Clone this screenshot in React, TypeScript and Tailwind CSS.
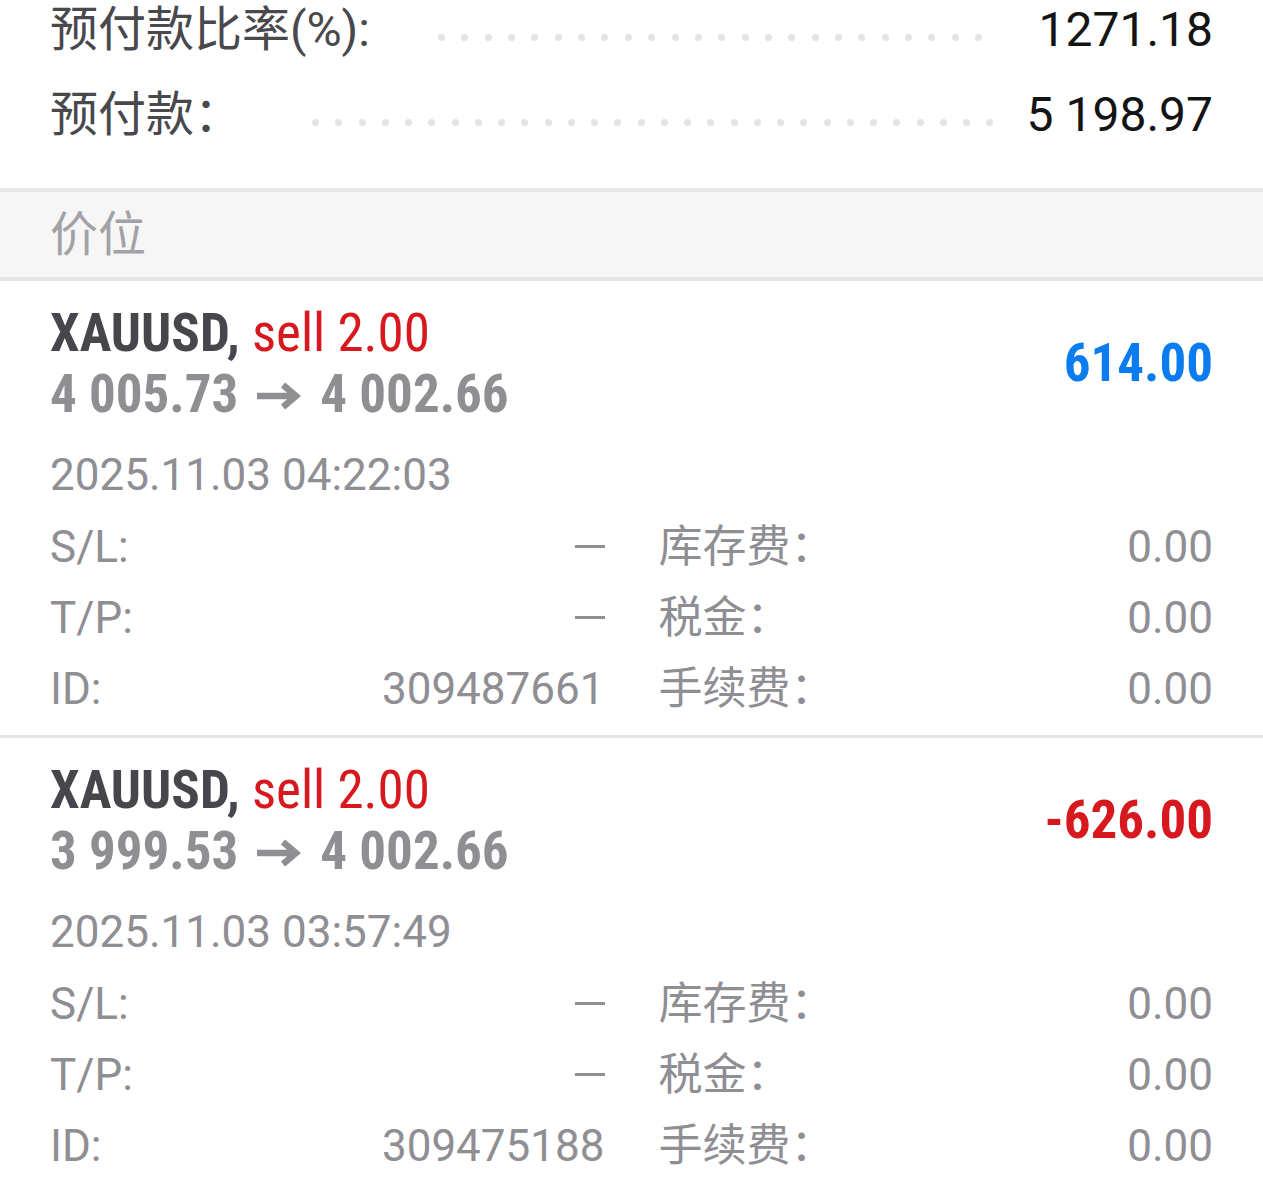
import React from 'react';

const latin = { fontFamily: '"Roboto", "Noto Sans CJK SC", sans-serif' };
const cond = { fontFamily: '"Roboto Condensed", "Roboto", "Noto Sans CJK SC", sans-serif' };

type Position = {
  symbol: string;
  side: string;
  open: string;
  current: string;
  profit: string;
  time: string;
  id: string;
};

const positions: Position[] = [
  {
    symbol: 'XAUUSD',
    side: 'sell 2.00',
    open: '4 005.73',
    current: '4 002.66',
    profit: '614.00',
    time: '2025.11.03 04:22:03',
    id: '309487661',
  },
  {
    symbol: 'XAUUSD',
    side: 'sell 2.00',
    open: '3 999.53',
    current: '4 002.66',
    profit: '-626.00',
    time: '2025.11.03 03:57:49',
    id: '309475188',
  },
];

function Dots({ count, className }: { count: number; className: string }) {
  return (
    <div className={`flex flex-1 justify-between mt-[14px] ${className}`}>
      {Array.from({ length: count }).map((_, i) => (
        <span key={i} className="w-[7px] h-[7px] rounded-full bg-[#e3e3e3]" />
      ))}
    </div>
  );
}

function Arrow() {
  return (
    <svg width="44" height="30" viewBox="0 0 44 30" className="mx-[19px] mt-[2px] shrink-0" aria-label="→">
      <path d="M0 15h38M26 4l13 11-13 11" fill="none" stroke="currentColor" strokeWidth="6.5" />
    </svg>
  );
}

function Cell({ label, value }: { label: string; value: string }) {
  return (
    <div className="flex items-center justify-between h-[71px]">
      <span>{label}</span>
      {value === '—' ? (
        <span className="block w-[30px] h-[3px] bg-[#8e8e93]" />
      ) : (
        <span>{value}</span>
      )}
    </div>
  );
}

function PositionCard({ p }: { p: Position }) {
  const profitColor = p.profit.startsWith('-') ? 'text-[#d7191f]' : 'text-[#0b7cf0]';
  return (
    <div className="px-[50px] pt-[22px] pb-[11px] border-b-[3px] border-[#e6e6e6]">
      <div className="flex items-center justify-between" style={cond}>
        <div className="text-[53px] leading-[61px]">
          <div>
            <span className="font-bold text-[#46464c]">{p.symbol},</span>{' '}
            <span className="text-[#d7191f]">{p.side}</span>
          </div>
          <div className="font-bold text-[#8e8e93] flex items-center">
            <span>{p.open}</span>
            <Arrow />
            <span>{p.current}</span>
          </div>
        </div>
        <div className={`text-[53px] font-bold ${profitColor}`}>{p.profit}</div>
      </div>
      <div style={latin} className="text-[44px] text-[#8e8e93]">
        <div className="mt-[15px] leading-[71px]">{p.time}</div>
        <div className="grid grid-cols-2 gap-x-[54px]">
          <Cell label="S/L:" value="—" />
          <Cell label="库存费：" value="0.00" />
          <Cell label="T/P:" value="—" />
          <Cell label="税金：" value="0.00" />
          <Cell label="ID:" value={p.id} />
          <Cell label="手续费：" value="0.00" />
        </div>
      </div>
    </div>
  );
}

export default function App() {
  return (
    <div className="w-[1263px] h-[1184px] overflow-hidden bg-white" style={latin}>
      {/* Account summary */}
      <div className="px-[50px] flex flex-col gap-[25px] mb-[43px] text-[48px]">
        <div className="flex items-center h-[60px]">
          <span className="text-[#48484d]">预付款比率(%):</span>
          <Dots count={24} className="ml-[68px] mr-[56px]" />
          <span className="text-[#141414]">1271.18</span>
        </div>
        <div className="flex items-center h-[60px]">
          <span className="text-[#48484d]">预付款：</span>
          <Dots count={30} className="ml-[70px] mr-[33px]" />
          <span className="text-[#141414]">5 198.97</span>
        </div>
      </div>

      {/* Section header */}
      <div className="h-[93px] flex items-center px-[50px] bg-[#f6f6f6] border-y-4 border-[#e6e6e6]">
        <span className="text-[48px] text-[#a2a2a6]">价位</span>
      </div>

      {positions.map((p) => (
        <PositionCard key={p.id} p={p} />
      ))}
    </div>
  );
}
